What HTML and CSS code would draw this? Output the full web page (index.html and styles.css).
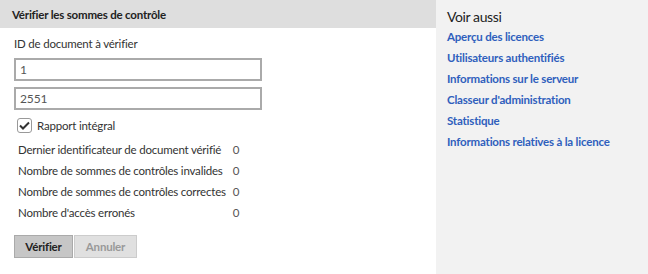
FILE: index.html
```html
<!DOCTYPE html>
<html lang="fr">
<head>
<meta charset="utf-8">
<link rel="stylesheet" href="styles.css">
</head>
<body>
<div class="page">
  <main class="main">
    <div class="header">Vérifier les sommes de contrôle</div>
    <div class="content">
      <div class="label">ID de document à vérifier</div>
      <input class="field" type="text" value="1">
      <input class="field" type="text" value="2551">
      <label class="check">
        <span class="box"><svg width="11" height="9" viewBox="0 0 11 9"><path d="M1 4.5 L4 7.5 L10 1.5" fill="none" stroke="#333" stroke-width="2"/></svg></span>
        <span>Rapport intégral</span>
      </label>
      <div class="stats">
        <span>Dernier identificateur de document vérifié</span><span class="val">0</span>
        <span>Nombre de sommes de contrôles invalides</span><span class="val">0</span>
        <span>Nombre de sommes de contrôles correctes</span><span class="val">0</span>
        <span>Nombre d'accès erronés</span><span class="val">0</span>
      </div>
      <div class="buttons">
        <button class="btn primary">Vérifier</button>
        <button class="btn disabled">Annuler</button>
      </div>
    </div>
  </main>
  <aside class="side">
    <div class="side-title">Voir aussi</div>
    <a href="#">Aperçu des licences</a>
    <a href="#">Utilisateurs authentifiés</a>
    <a href="#">Informations sur le serveur</a>
    <a href="#">Classeur d'administration</a>
    <a href="#">Statistique</a>
    <a href="#">Informations relatives à la licence</a>
  </aside>
</div>
</body>
</html>
```

FILE: styles.css
```css
html, body { margin: 0; padding: 0; background: #fff; }
body { font-family: Lato, "Noto Sans", sans-serif; font-size: 11.5px; letter-spacing: -0.2px; color: #333; }
.page { display: flex; height: 274px; }
.main { width: 436px; flex: none; }
.header { height: 28px; background: #dedede; padding-left: 12px; font-weight: bold; line-height: 29px; color: #222; }
.content { padding: 8px 0 0 14px; display: flex; flex-direction: column; }
.label { line-height: 16px; margin-bottom: 6px; color: #333; }
.field { width: 248px; height: 23px; box-sizing: border-box; border: 2px solid #aaa; padding: 0 4px; font: 12px Lato, sans-serif; letter-spacing: -0.1px; color: #555; margin: 0 0 6px 0; outline: none; }
.check { display: flex; align-items: center; gap: 5px; margin: 1px 0 0 3px; height: 17px; }
.box { width: 15px; height: 15px; box-sizing: border-box; border: 1px solid #999; border-radius: 3px; display: flex; align-items: center; justify-content: center; background: #fff; }
.stats { display: grid; grid-template-columns: max-content max-content; column-gap: 7px; margin: 5px 0 0 4px; }
.stats span { line-height: 21px; }
.stats .val { color: #555; }
.buttons { display: flex; gap: 1px; margin-top: 12px; }
.btn { height: 23px; box-sizing: border-box; font: bold 11.5px Lato, sans-serif; letter-spacing: -0.2px; padding: 0; border: 1px solid #aaa; }
.primary { background: #c6c6c6; color: #222; width: 59px; }
.disabled { background: #e0e0e0; color: #999; border-color: #ccc; width: 63px; }
.side { flex: 1; background: #f2f2f2; padding: 8px 0 0 11px; display: flex; flex-direction: column; }
.side-title { font-size: 14px; letter-spacing: -0.4px; line-height: 18px; color: #222; margin-bottom: 0; }
.side a { color: #2f5fbd; font-weight: bold; text-decoration: none; line-height: 21px; }
```
